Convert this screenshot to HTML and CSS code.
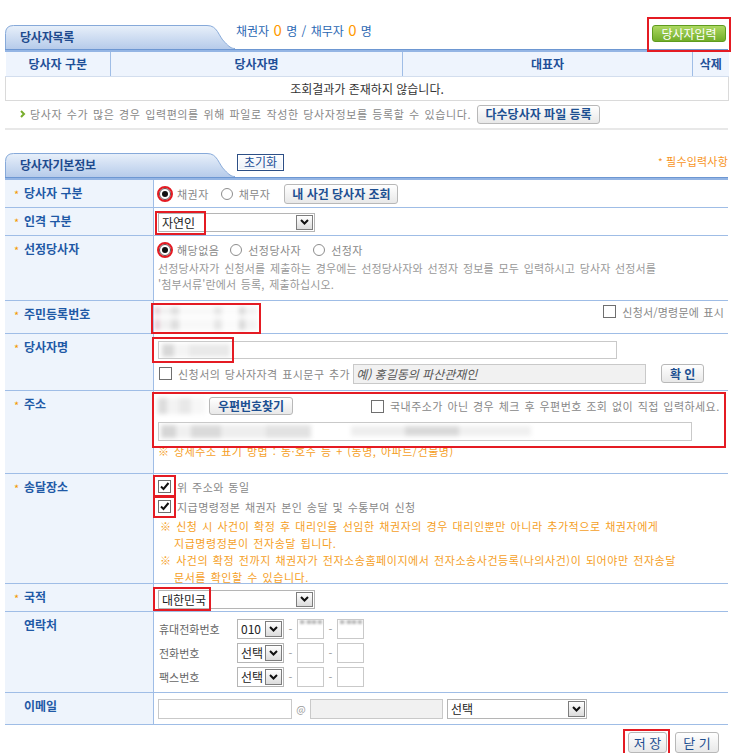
FILE: index.html
```html
<!DOCTYPE html>
<html lang="ko">
<head>
<meta charset="utf-8">
<title>당사자목록</title>
<link rel="stylesheet" href="styles.css">
</head>
<body>
<div class="page">

  <div class="head1">
    <div class="tab">
      <svg width="230" height="24" viewBox="0 0 230 24">
        <defs>
          <linearGradient id="tg1" x1="0" y1="0" x2="0" y2="1">
            <stop offset="0" stop-color="#e8f0fa"/>
            <stop offset="1" stop-color="#b6cbea"/>
          </linearGradient>
        </defs>
        <path d="M0.5,24 L0.5,8.5 Q0.5,0.5 8.5,0.5 L202,0.5 C213,0.5 213,11 220,17.5 C224,21.5 226,23.5 230,23.5 L230,24 Z" fill="url(#tg1)"/>
        <path d="M0.5,24 L0.5,8.5 Q0.5,0.5 8.5,0.5 L202,0.5 C213,0.5 213,11 220,17.5 C224,21.5 226,23.5 230,23.5" fill="none" stroke="#86a9d9"/>
      </svg>
      <span class="tab-title">당사자목록</span>
    </div>
    <div class="counts">채권자 <span class="num">0</span> 명 / 채무자 <span class="num">0</span> 명</div>
    <div class="head-right">
      <button class="btn-green" type="button">당사자입력</button>
      <span class="mark mark-green"></span>
    </div>
  </div>
  <div class="bar"></div>

  <table class="list">
    <colgroup><col class="c1"><col class="c2"><col class="c3"><col class="c4"></colgroup>
    <thead>
      <tr><th>당사자 구분</th><th>당사자명</th><th>대표자</th><th>삭제</th></tr>
    </thead>
    <tbody>
      <tr><td colspan="4">조회결과가 존재하지 않습니다.</td></tr>
    </tbody>
  </table>

  <div class="info">
    <svg class="arr" width="6" height="8" viewBox="0 0 6 8"><path d="M1 1l3 3-3 3" fill="none" stroke="#78ad2c" stroke-width="2"/></svg>
    <span class="info-text">당사자 수가 많은 경우 입력편의를 위해 파일로 작성한 당사자정보를 등록할 수 있습니다.</span>
    <button class="btn btn-multi" type="button">다수당사자 파일 등록</button>
  </div>
  <div class="sep"></div>

  <div class="head2">
    <div class="tab">
      <svg width="230" height="24" viewBox="0 0 230 24">
        <defs>
          <linearGradient id="tg2" x1="0" y1="0" x2="0" y2="1">
            <stop offset="0" stop-color="#e8f0fa"/>
            <stop offset="1" stop-color="#b6cbea"/>
          </linearGradient>
        </defs>
        <path d="M0.5,24 L0.5,8.5 Q0.5,0.5 8.5,0.5 L202,0.5 C213,0.5 213,11 220,17.5 C224,21.5 226,23.5 230,23.5 L230,24 Z" fill="url(#tg2)"/>
        <path d="M0.5,24 L0.5,8.5 Q0.5,0.5 8.5,0.5 L202,0.5 C213,0.5 213,11 220,17.5 C224,21.5 226,23.5 230,23.5" fill="none" stroke="#86a9d9"/>
      </svg>
      <span class="tab-title">당사자기본정보</span>
    </div>
    <button class="btn-reset" type="button">초기화</button>
    <div class="req"><span class="req-star">*</span> 필수입력사항</div>
  </div>
  <div class="bar"></div>

  <div class="form">
    <!-- 당사자 구분 -->
    <div class="row r1">
      <div class="lab"><span class="star">*</span>당사자 구분</div>
      <div class="val">
        <div class="line">
          <span class="rd on mk first"></span><span class="opt">채권자</span>
          <span class="rd gap13"></span><span class="opt">채무자</span>
          <button class="btn btn-case" type="button">내 사건 당사자 조회</button>
        </div>
      </div>
    </div>

    <!-- 인격 구분 -->
    <div class="row r2">
      <div class="lab"><span class="star">*</span>인격 구분</div>
      <div class="val">
        <div class="sel sel-wide">
          <span class="sv">자연인</span>
          <span class="sa"><svg width="9" height="6" viewBox="0 0 9 6"><path d="M1 1l3.5 3.5L8 1" fill="none" stroke="#111" stroke-width="2"/></svg></span>
          <span class="mark mark-sel"></span>
        </div>
      </div>
    </div>

    <!-- 선정당사자 -->
    <div class="row r3">
      <div class="lab"><span class="star">*</span>선정당사자</div>
      <div class="val">
        <div class="line">
          <span class="rd on mk first"></span><span class="opt">해당없음</span>
          <span class="rd gap12"></span><span class="opt">선정당사자</span>
          <span class="rd gap13"></span><span class="opt">선정자</span>
        </div>
        <div class="desc">선정당사자가 신청서를 제출하는 경우에는 선정당사자와 선정자 정보를 모두 입력하시고 당사자 선정서를<br>'첨부서류'란에서 등록, 제출하십시오.</div>
      </div>
    </div>

    <!-- 주민등록번호 -->
    <div class="row r4">
      <div class="lab"><span class="star">*</span>주민등록번호</div>
      <div class="val">
        <div class="jumin"><span class="blur blur-jumin"></span></div>
        <div class="chk-right"><span class="cb"></span><span class="opt">신청서/명령문에 표시</span></div>
      </div>
    </div>

    <!-- 당사자명 -->
    <div class="row r5">
      <div class="lab"><span class="star">*</span>당사자명</div>
      <div class="val">
        <div class="name-line">
          <div class="inp name-inp"><span class="blur blur-name"></span></div>
          <span class="mark mark-name"></span>
        </div>
        <div class="line2">
          <span class="cb first"></span><span class="opt">신청서의 당사자자격 표시문구 추가</span>
          <div class="inp qual-inp"><span class="ph">예) 홍길동의 파산관재인</span></div>
          <button class="btn btn-ok" type="button">확 인</button>
        </div>
      </div>
    </div>

    <!-- 주소 -->
    <div class="row r6">
      <div class="lab"><span class="star">*</span>주소</div>
      <div class="val">
        <div class="addr-a">
          <span class="blur blur-zip"></span>
          <button class="btn btn-zip" type="button">우편번호찾기</button>
          <span class="cb cb-foreign"></span><span class="opt">국내주소가 아닌 경우 체크 후 우편번호 조회 없이 직접 입력하세요.</span>
        </div>
        <div class="inp addr-inp"><span class="blur blur-addr1"></span><span class="blur blur-addr2"></span></div>
        <div class="note">※ 상세주소 표기 방법 : 동·호수 등 + (동명, 아파트/건물명)</div>
        <span class="mark mark-addr"></span>
      </div>
    </div>

    <!-- 송달장소 -->
    <div class="row r7">
      <div class="lab"><span class="star">*</span>송달장소</div>
      <div class="val">
        <div class="cline"><span class="cb on mk-cb"><svg width="11" height="11" viewBox="0 0 11 11"><path d="M2 5.5l2.5 2.5L9.5 2" fill="none" stroke="#111" stroke-width="2"/></svg></span><span class="opt">위 주소와 동일</span></div>
        <div class="cline"><span class="cb on mk-cb"><svg width="11" height="11" viewBox="0 0 11 11"><path d="M2 5.5l2.5 2.5L9.5 2" fill="none" stroke="#111" stroke-width="2"/></svg></span><span class="opt">지급명령정본 채권자 본인 송달 및 수통부여 신청</span></div>
        <div class="onote">※ 신청 시 사건이 확정 후 대리인을 선임한 채권자의 경우 대리인뿐만 아니라 추가적으로 채권자에게<br>지급명령정본이 전자송달 됩니다.</div>
        <div class="onote">※ 사건의 확정 전까지 채권자가 전자소송홈페이지에서 전자소송사건등록(나의사건)이 되어야만 전자송달<br>문서를 확인할 수 있습니다.</div>
      </div>
    </div>

    <!-- 국적 -->
    <div class="row r8">
      <div class="lab"><span class="star">*</span>국적</div>
      <div class="val">
        <div class="sel sel-wide">
          <span class="sv">대한민국</span>
          <span class="sa"><svg width="9" height="6" viewBox="0 0 9 6"><path d="M1 1l3.5 3.5L8 1" fill="none" stroke="#111" stroke-width="2"/></svg></span>
          <span class="mark mark-nat"></span>
        </div>
      </div>
    </div>

    <!-- 연락처 -->
    <div class="row r9">
      <div class="lab nostar">연락처</div>
      <div class="val">
        <div class="tline">
          <span class="tl">휴대전화번호</span>
          <div class="sel sel-sm"><span class="sv">010</span><span class="sa"><svg width="9" height="6" viewBox="0 0 9 6"><path d="M1 1l3.5 3.5L8 1" fill="none" stroke="#111" stroke-width="2"/></svg></span></div>
          <span class="dash">-</span>
          <div class="inp tin"><span class="blur blur-tel"></span></div>
          <span class="dash">-</span>
          <div class="inp tin"><span class="blur blur-tel"></span></div>
        </div>
        <div class="tline">
          <span class="tl">전화번호</span>
          <div class="sel sel-sm"><span class="sv">선택</span><span class="sa"><svg width="9" height="6" viewBox="0 0 9 6"><path d="M1 1l3.5 3.5L8 1" fill="none" stroke="#111" stroke-width="2"/></svg></span></div>
          <span class="dash">-</span>
          <div class="inp tin"></div>
          <span class="dash">-</span>
          <div class="inp tin"></div>
        </div>
        <div class="tline">
          <span class="tl">팩스번호</span>
          <div class="sel sel-sm"><span class="sv">선택</span><span class="sa"><svg width="9" height="6" viewBox="0 0 9 6"><path d="M1 1l3.5 3.5L8 1" fill="none" stroke="#111" stroke-width="2"/></svg></span></div>
          <span class="dash">-</span>
          <div class="inp tin"></div>
          <span class="dash">-</span>
          <div class="inp tin"></div>
        </div>
      </div>
    </div>

    <!-- 이메일 -->
    <div class="row r10">
      <div class="lab nostar">이메일</div>
      <div class="val">
        <div class="inp mail1"></div>
        <span class="at">@</span>
        <div class="inp mail2"></div>
        <div class="sel sel-mail"><span class="sv">선택</span><span class="sa"><svg width="9" height="6" viewBox="0 0 9 6"><path d="M1 1l3.5 3.5L8 1" fill="none" stroke="#111" stroke-width="2"/></svg></span></div>
      </div>
    </div>
  </div>

  <div class="actions">
    <div class="save-wrap">
      <button class="btn btn-foot btn-save" type="button">저 장</button>
      <span class="mark mark-save"></span>
    </div>
    <button class="btn btn-foot btn-close" type="button">닫 기</button>
  </div>
</div>
</body>
</html>
```

FILE: styles.css
```css
* { box-sizing: border-box; }

body {
  margin: 0;
  background: #fff;
  color: #333;
  font-family: "Noto Sans CJK KR", "Noto Sans", sans-serif;
  font-size: 12px;
}

.page {
  margin-left: 5px;
  width: 723px;
}

/* ---------- section headers ---------- */
.head1 {
  display: flex;
  align-items: flex-end;
  height: 49px;
}

.tab {
  display: grid;
  flex: none;
  width: 230px;
  height: 24px;
}
.tab > * { grid-area: 1 / 1; }
.tab svg { display: block; }
.tab-title {
  align-self: center;
  padding-left: 15px;
  color: #1e4a8e;
  font-weight: bold;
  font-size: 12px;
  line-height: 16px;
  letter-spacing: -0.2px;
}

.counts {
  align-self: flex-end;
  margin: 0 0 10px 1px;
  color: #2b68b3;
  font-size: 12px;
  line-height: 16px;
  word-spacing: 1px;
}
.counts .num {
  color: #ff9a00;
  font-size: 15px;
}

.head-right {
  position: relative;
  margin: 0 2px 7px auto;
}
.btn-green {
  display: block;
  width: 74px;
  height: 17px;
  padding: 0;
  border: 1px solid #5f9b1f;
  border-radius: 3px;
  background: linear-gradient(#acd860, #72ad2a);
  color: #fff;
  font-family: inherit;
  font-size: 12px;
  line-height: 15px;
}

.mark {
  position: absolute;
  border: 2px solid #e41b23;
  pointer-events: none;
}
.mark-green { left: -5px; top: -8px; right: -5px; bottom: -10px; }

.bar {
  height: 3px;
  background: #94b5e4;
  border-top: 1px solid #6d97d2;
}

/* ---------- list table ---------- */
.list {
  width: 723px;
  border-collapse: collapse;
  table-layout: fixed;
}
.list .c1 { width: 105px; }
.list .c2 { width: 292px; }
.list .c3 { width: 290px; }
.list .c4 { width: 36px; }
.list th {
  height: 24px;
  padding: 0;
  background: #eef4fd;
  color: #1f4f98;
  font-size: 12px;
  font-weight: bold;
  border-right: 1px solid #9fbde6;
  border-bottom: 1px solid #d3deee;
}
.list th:last-child { border-right: none; }
.list td {
  height: 24px;
  padding: 0;
  text-align: center;
  color: #333;
  font-size: 12px;
  border: 1px solid #dadada;
  border-top: none;
}

.info {
  display: flex;
  align-items: center;
  height: 19px;
  margin-top: 4px;
  padding-left: 15px;
}
.info .arr { margin-right: 4px; }
.info-text {
  color: #888;
  font-size: 11px;
  line-height: 19px;
  letter-spacing: 0.6px;
  word-spacing: 1px;
  white-space: nowrap;
}

.btn {
  display: inline-flex;
  flex: none;
  align-items: center;
  justify-content: center;
  padding: 0;
  border: 1px solid #b8b8b8;
  border-radius: 3px;
  background: linear-gradient(#ffffff, #e8e8e8);
  color: #1d4f91;
  font-family: inherit;
  font-size: 12px;
  font-weight: bold;
  line-height: 1;
  white-space: nowrap;
}
.btn-multi { width: 123px; height: 19px; margin-left: 6px; }

.sep {
  height: 2px;
  margin-top: 4px;
  background: #e8e8e8;
}

.head2 {
  display: flex;
  align-items: flex-start;
  height: 47px;
}
.head2 .tab { align-self: flex-end; }
.btn-reset {
  width: 47px;
  height: 17px;
  margin: 24px 0 0 2px;
  padding: 0;
  border: 1px solid #2d4f86;
  background: linear-gradient(#ffffff, #eaf0f8);
  box-shadow: inset 0 0 0 1px #fff;
  color: #1e4f96;
  font-family: inherit;
  font-size: 12px;
  line-height: 14px;
}
.req {
  margin: 23px 0 0 auto;
  color: #f7941d;
  font-size: 11px;
  line-height: 16px;
  letter-spacing: 0.2px;
}
.req-star { font-size: 10px; }

/* ---------- form ---------- */
.row {
  display: flex;
  border-bottom: 1px solid #9fbde6;
}
.r1 { height: 28px; }
.r2 { height: 28px; }
.r3 { height: 65px; }
.r4 { height: 33px; }
.r5 { height: 57px; }
.r6 { height: 83px; }
.r7 { height: 110px; }
.r8 { height: 28px; }
.r9 { height: 81px; }
.r10 { height: 32px; }

.lab {
  flex: none;
  width: 149px;
  padding: 5px 0 0 9px;
  background: #eef4fc;
  border-right: 1px solid #9fbde6;
  color: #1f59a6;
  font-size: 12px;
  font-weight: bold;
  line-height: 16px;
  white-space: nowrap;
}
.lab.nostar { padding-left: 19px; }
.star {
  display: inline-block;
  width: 10px;
  color: #f39800;
  font-size: 11px;
  font-weight: normal;
  vertical-align: -1px;
}

.val {
  position: relative;
  flex: 1;
  min-width: 0;
  padding: 0 4px;
  color: #888;
  font-size: 11px;
}

.line {
  display: flex;
  align-items: center;
  height: 20px;
}
.r1 .val { padding-top: 4px; }
.r3 .val { padding-top: 4px; }

.rd {
  position: relative;
  flex: none;
  width: 12px;
  height: 12px;
  border: 1px solid #8d8d8d;
  border-radius: 50%;
  background: #fff;
}
.rd.on { border-color: #555; }
.rd.on::after {
  content: "";
  position: absolute;
  left: 2px;
  top: 2px;
  width: 6px;
  height: 6px;
  border-radius: 50%;
  background: #111;
}
.rd.first { margin-left: 1px; }
.gap12 { margin-left: 11px; }
.gap13 { margin-left: 12px; }
.mk { outline: 2px solid #e41b23; outline-offset: 0; }

.opt {
  margin-left: 6px;
  line-height: 16px;
  letter-spacing: 0.45px;
  word-spacing: 1px;
  white-space: nowrap;
}
.btn-case { width: 114px; height: 20px; margin-left: 14px; }

.r2 .val { padding-top: 5px; }
.r8 .val { padding-top: 6px; }

.sel {
  position: relative;
  display: flex;
  align-items: center;
  height: 19px;
  padding: 1px;
  border: 1px solid #b5b5b5;
  background: #fff;
}
.sel-wide { width: 157px; }
.sel .sv {
  flex: 1;
  padding-left: 2px;
  color: #222;
  font-size: 12px;
  line-height: 15px;
  white-space: nowrap;
}
.sel .sa {
  display: flex;
  flex: none;
  align-items: center;
  justify-content: center;
  width: 17px;
  height: 100%;
  border: 1px solid #7d7d7d;
  background: linear-gradient(#ffffff, #dcdcdc);
}
.mark-sel { left: -4px; top: -3px; width: 51px; height: 24px; }
.mark-nat { left: -6px; top: -4px; width: 58px; height: 24px; }

.desc {
  color: #999;
  line-height: 16px;
  letter-spacing: 0.13px;
  word-spacing: 1.5px;
  white-space: nowrap;
}

.blur {
  display: block;
  filter: blur(2px);
}

.r4 .val {
  display: flex;
  align-items: flex-start;
  justify-content: space-between;
}
.jumin {
  width: 110px;
  height: 31px;
  margin: 2px 0 0 -7px;
  padding: 2px;
  border: 2px solid #e41b23;
  overflow: hidden;
}
.blur-jumin {
  width: 100%;
  height: 100%;
  background:
    linear-gradient(180deg, rgba(255,255,255,0) 0 30%, rgba(255,255,255,0.7) 30% 55%, rgba(255,255,255,0) 55%),
    linear-gradient(90deg, #e3c3cc 0 4%, #f1f1f1 4% 16%, #dedede 16% 24%, #f8f8f8 24% 58%, #e6e6e6 58% 66%, #fbfbfb 66% 82%, #d9d9d9 82% 88%, #f3f3f3 88%);
}
.chk-right {
  display: flex;
  align-items: center;
  height: 14px;
  margin-top: 4px;
}
.chk-right .opt { letter-spacing: 0.2px; }

.cb {
  display: flex;
  flex: none;
  align-items: center;
  justify-content: center;
  width: 13px;
  height: 13px;
  border: 1px solid #6f6f6f;
  background: #fff;
}
.cb.first { margin-left: 1px; }
.mk-cb { outline: 2px solid #e41b23; outline-offset: 3px; }

.inp {
  flex: none;
  height: 19px;
  border: 1px solid #c9c9c9;
  background: #fff;
  overflow: hidden;
}

.r5 .val { padding-top: 7px; }
.name-line { position: relative; display: flex; }
.name-inp { width: 459px; height: 18px; padding: 2px 0 0 3px; }
.blur-name {
  width: 68px;
  height: 13px;
  background: linear-gradient(90deg, #d8d8d8 0 18%, #f4f4f4 18% 40%, #e9e9e9 40% 100%);
}
.mark-name { left: -6px; top: -4px; width: 82px; height: 26px; }

.line2 {
  display: flex;
  align-items: center;
  height: 20px;
  margin-top: 5px;
}
.qual-inp {
  display: flex;
  align-items: center;
  width: 293px;
  height: 20px;
  margin-left: 3px;
  padding-left: 2px;
  background: #f1f1f1;
}
.ph {
  color: #555;
  font-size: 12px;
  font-style: italic;
  white-space: nowrap;
}
.btn-ok { width: 43px; height: 19px; margin-left: 15px; }

.r6 .val { padding-top: 6px; }
.addr-a {
  display: flex;
  align-items: center;
  height: 19px;
}
.blur-zip {
  width: 47px;
  height: 16px;
  background: linear-gradient(90deg, #dcdcdc 0 20%, #f3f3f3 20% 45%, #e8e8e8 45% 70%, #f7f7f7 70%);
}
.btn-zip { width: 84px; height: 18px; margin-left: 4px; font-weight: bold; }
.cb-foreign { margin-left: 78px; }
.addr-inp {
  display: flex;
  align-items: center;
  width: 534px;
  height: 19px;
  margin-top: 6px;
  padding-left: 2px;
}
.blur-addr1 {
  width: 150px;
  height: 13px;
  background: linear-gradient(90deg, #d6d6d6 0 10%, #f0f0f0 10% 20%, #dadada 20% 40%, #eeeeee 40% 70%, #e2e2e2 70%);
}
.blur-addr2 {
  width: 180px;
  height: 10px;
  margin-left: 40px;
  background: linear-gradient(90deg, #eeeeee 0 30%, #d9d9d9 30% 60%, #f0f0f0 60%);
}
.note {
  margin-top: 3px;
  color: #f5a01f;
  line-height: 14px;
  letter-spacing: 0.5px;
  word-spacing: 1px;
  white-space: nowrap;
}
.mark-addr { left: -2px; top: 1px; width: 574px; height: 56px; }

.r7 .val { padding-top: 3px; }
.cline {
  display: flex;
  align-items: center;
  height: 20px;
}
.onote {
  padding-left: 16px;
  text-indent: -14px;
  color: #f5a01f;
  line-height: 17px;
  letter-spacing: 0.55px;
  word-spacing: 1px;
  white-space: nowrap;
}
.cline + .onote { margin-top: 1px; }

.r9 .val {
  display: flex;
  flex-direction: column;
  gap: 4px;
  padding-top: 7px;
}
.tline {
  display: flex;
  align-items: center;
  height: 20px;
}
.tl {
  flex: none;
  width: 78px;
  margin-left: 1px;
  color: #666;
  white-space: nowrap;
}
.sel-sm { width: 47px; height: 20px; }
.dash {
  flex: none;
  width: 13px;
  color: #999;
  text-align: center;
}
.tin { width: 27px; height: 20px; }
.blur-tel {
  width: 22px;
  height: 4px;
  margin: 0 0 0 2px;
  filter: blur(0.8px);
  background: linear-gradient(90deg, #bbb 0 20%, #eee 20% 30%, #bbb 30% 50%, #eee 50% 55%, #bbb 55% 75%, #eee 75% 80%, #bbb 80%);
}

.r10 .val {
  display: flex;
  align-items: flex-start;
  padding-top: 6px;
}
.mail1 { width: 134px; height: 20px; }
.at {
  flex: none;
  width: 18px;
  color: #999;
  font-size: 10px;
  line-height: 20px;
  text-align: center;
}
.mail2 { width: 133px; height: 20px; background: #f1f1f1; }
.sel-mail { width: 140px; height: 20px; margin-left: 4px; }

/* ---------- actions ---------- */
.actions {
  display: flex;
  justify-content: flex-end;
  align-items: flex-start;
  gap: 8px;
  padding: 7px 9px 0 0;
}
.save-wrap { position: relative; }
.btn-foot {
  height: 21px;
  font-size: 13px;
  font-weight: normal;
  color: #1d4f91;
}
.btn-save { width: 39px; }
.btn-close { width: 44px; }
.mark-save { left: -5px; top: -3px; right: -3px; bottom: -2px; }
```
